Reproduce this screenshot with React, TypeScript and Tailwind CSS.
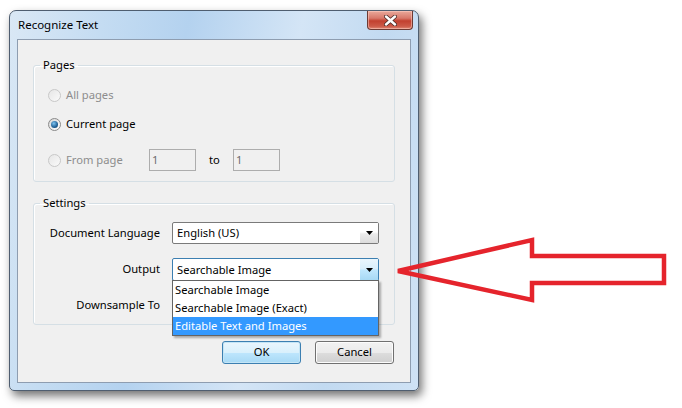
import { ReactNode } from "react";

const font = { fontFamily: '"Noto Sans", "Open Sans", sans-serif' };

const Radio = ({ checked, disabled }: { checked?: boolean; disabled?: boolean }) => (
  <span
    className={
      "flex h-[13px] w-[13px] shrink-0 items-center justify-center rounded-full border " +
      (disabled
        ? "border-[#c8c8c8] bg-[linear-gradient(135deg,#e6e6e6,#fafafa)]"
        : "border-[#8a8a8a] bg-[linear-gradient(135deg,#d6d6d6,#ffffff)]")
    }
  >
    {checked && (
      <span className="h-[7px] w-[7px] rounded-full bg-[radial-gradient(circle_at_40%_35%,#7ec4f0,#1f5f95_60%,#113a5e)]" />
    )}
  </span>
);

const RadioRow = ({
  label,
  checked,
  disabled,
  children,
  className = "",
}: {
  label: string;
  checked?: boolean;
  disabled?: boolean;
  children?: ReactNode;
  className?: string;
}) => (
  <div className={"flex items-center pl-[14px] " + className}>
    <Radio checked={checked} disabled={disabled} />
    <span className={"ml-[5px] whitespace-nowrap " + (disabled ? "w-[83px] text-[#8d8d8d]" : "text-black")}>{label}</span>
    {children}
  </div>
);

const PageInput = () => (
  <div className="flex h-[22px] w-[47px] items-center border border-[#adadad] bg-[#f0f0f0] pl-[2px] text-[#6d6d6d]">
    1
  </div>
);

const Caret = () => (
  <svg width="7" height="4" viewBox="0 0 7 4">
    <path d="M0 0h7L3.5 4z" fill="#000" />
  </svg>
);

const Combo = ({ value, active, children }: { value: string; active?: boolean; children?: ReactNode }) => (
  <div
    className={
      "relative flex w-[207px] items-center rounded-[2px] border bg-white " +
      (active ? "h-[23px] border-[#3c7fb1]" : "h-[22px] border-[#7a7a7a]")
    }
  >
    <span className="flex-1 whitespace-nowrap pl-[4px] leading-none">{value}</span>
    <span
      className={
        "flex h-full w-[18px] items-center justify-center " +
        (active
          ? "bg-[linear-gradient(#eaf6fd_0%,#d9effc_45%,#bee6fd_55%,#a7d9f5_100%)]"
          : "bg-[linear-gradient(#ffffff_0%,#ffffff_45%,#ebebeb_55%,#dcdcdc_100%)]")
      }
    >
      <Caret />
    </span>
    {children}
  </div>
);

const Row = ({ label, children, className = "" }: { label: string; children: ReactNode; className?: string }) => (
  <div className={"flex items-center pl-[15px] " + className}>
    <span className="w-[111px] whitespace-nowrap text-right">{label}</span>
    <div className="ml-[12px]">{children}</div>
  </div>
);

const Button = ({ label, primary }: { label: string; primary?: boolean }) => (
  <button
    className={
      "flex h-[23px] w-[79px] items-center justify-center rounded-[3px] border text-black " +
      (primary
        ? "border-[#3c7fb1] bg-[linear-gradient(#eaf6fd_0%,#d9f0fc_50%,#bee6fd_51%,#a7d9f5_100%)] shadow-[inset_0_0_0_1px_#c4e5f6]"
        : "border-[#707070] bg-[linear-gradient(#f2f2f2_0%,#ebebeb_50%,#dddddd_51%,#cfcfcf_100%)] shadow-[inset_0_0_0_1px_#fcfcfc]")
    }
  >
    {label}
  </button>
);

export default function App() {
  return (
    <div className="relative h-[408px] w-[682px] overflow-hidden bg-white text-[11.2px] text-black" style={font}>
      <div className="ml-[9px] mt-[10px] flex h-[381px] w-[410px] flex-col rounded-t-[7px] rounded-b-[5px] border border-[#4f5e70] bg-[linear-gradient(100deg,#dae8f5_0%,#c4dcf2_20%,#b4d2ef_38%,#d4e5f6_62%,#c2daf1_80%,#cfe2f5_100%)] shadow-[3px_5px_10px_rgba(0,0,0,0.55)]">
        <div className="flex h-[28px] shrink-0 justify-between">
          <span className="mt-[6px] pl-[8px] text-[11.5px] leading-[16px]">Recognize Text</span>
          <div className="mr-[5px] flex h-[19px] w-[46px] items-center justify-center rounded-b-[4px] border border-t-0 border-[#6d3a33] bg-[linear-gradient(#e9a99b_0%,#d7786a_40%,#c2402f_55%,#cc5a48_85%,#e08a76_100%)] shadow-[inset_0_0_0_1px_rgba(255,210,200,0.5)]">
            <svg width="13" height="11" viewBox="0 0 13 11">
              <path d="M2 1.5l9 8M11 1.5l-9 8" stroke="#4a2a25" strokeWidth="4" strokeLinecap="round" />
              <path d="M2 1.5l9 8M11 1.5l-9 8" stroke="#ffffff" strokeWidth="2.4" strokeLinecap="round" />
            </svg>
          </div>
        </div>
        <div className="mx-[7px] h-[344px] border border-[#8e9db0] bg-[#f0f0f0] px-[15px] pt-[17px]">
          <fieldset className="rounded-[3px] border border-[#d5dfe5] pb-[10px] shadow-[inset_1px_1px_0_#ffffff]">
            <legend className="ml-[6px] px-[3px] leading-[16px]">Pages</legend>
            <RadioRow label="All pages" disabled className="mt-[12px] h-[20px]" />
            <RadioRow label="Current page" checked className="mt-[9px] h-[20px]" />
            <RadioRow label="From page" disabled className="mt-[15px] h-[22px]">
              <PageInput />
              <span className="mx-[13px] w-[11px]">to</span>
              <PageInput />
            </RadioRow>
          </fieldset>
          <fieldset className="mt-[13px] rounded-[3px] border border-[#d5dfe5] pb-[8px] shadow-[inset_1px_1px_0_#ffffff]">
            <legend className="ml-[6px] px-[3px] leading-[16px]">Settings</legend>
            <Row label="Document Language" className="mt-[11px]">
              <Combo value="English (US)" />
            </Row>
            <Row label="Output" className="mt-[14px]">
              <Combo value="Searchable Image" active>
                <div className="absolute left-[-1px] top-full z-10 w-[207px] border border-[#646464] bg-white shadow-[2px_2px_2px_rgba(0,0,0,0.3)]">
                  <div className="h-[18px] whitespace-nowrap pl-[2px] leading-[18px]">Searchable Image</div>
                  <div className="h-[18px] whitespace-nowrap pl-[2px] leading-[18px]">Searchable Image (Exact)</div>
                  <div className="h-[18px] whitespace-nowrap bg-[#3399ff] pl-[2px] leading-[18px] text-white">Editable Text and Images</div>
                </div>
              </Combo>
            </Row>
            <Row label="Downsample To" className="mt-[13px]">
              <Combo value="" />
            </Row>
          </fieldset>
          <div className="mt-[16px] flex justify-end gap-[14px] pr-[1px]">
            <Button label="OK" primary />
            <Button label="Cancel" />
          </div>
        </div>
      </div>
      <svg className="absolute left-[390px] top-[232px]" width="282" height="76" viewBox="390 232 282 76">
        <polygon
          points="398,271 532,240 532,256 664,256 664,283 532,283 532,300"
          fill="none"
          stroke="#e5242c"
          strokeWidth="4.5"
          strokeLinejoin="miter"
        />
      </svg>
    </div>
  );
}
